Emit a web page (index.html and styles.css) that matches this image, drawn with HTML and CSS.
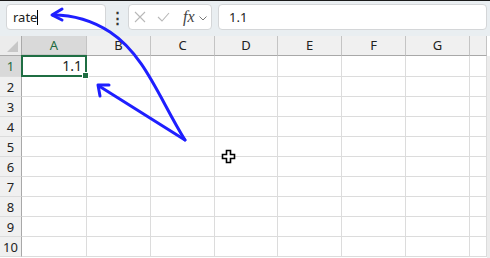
FILE: index.html
```html
<!DOCTYPE html>
<html lang="en">
<head>
    <meta charset="UTF-8">
    <title>Name box</title>
    <link rel="stylesheet" href="styles.css">
</head>
<body>
    <div class="toolbar">
        <div class="name-box">rate<span class="caret"></span></div>
        <div class="dots">&#8942;</div>
        <div class="fx-buttons">
            <svg width="12" height="12" viewBox="0 0 12 12" class="ico"><path d="M1 1L11 11M11 1L1 11" stroke="#b8b8b8" stroke-width="1.1" fill="none"/></svg>
            <svg width="13" height="10" viewBox="0 0 13 10" class="ico"><path d="M1 5L5 9L12 1" stroke="#b8b8b8" stroke-width="1.1" fill="none"/></svg>
            <span class="fx">fx</span>
            <svg width="8" height="5" viewBox="0 0 8 5" class="chev"><path d="M0.5 0.5L4 4L7.5 0.5" stroke="#777" stroke-width="1" fill="none"/></svg>
        </div>
        <div class="formula">1.1</div>
    </div>

    <div class="sheet">
        <div class="grid">
            <div class="corner"></div>
            <div class="colhead active">A</div>
            <div class="colhead">B</div>
            <div class="colhead">C</div>
            <div class="colhead">D</div>
            <div class="colhead">E</div>
            <div class="colhead">F</div>
            <div class="colhead">G</div>
            <div class="colhead"></div>

            <div class="rowhead active">1</div>
            <div class="cell selected">1.1<span class="handle"></span></div>
            <div class="cell"></div><div class="cell"></div><div class="cell"></div><div class="cell"></div><div class="cell"></div><div class="cell"></div><div class="cell"></div>

            <div class="rowhead">2</div>
            <div class="cell"></div><div class="cell"></div><div class="cell"></div><div class="cell"></div><div class="cell"></div><div class="cell"></div><div class="cell"></div><div class="cell"></div>
            <div class="rowhead">3</div>
            <div class="cell"></div><div class="cell"></div><div class="cell"></div><div class="cell"></div><div class="cell"></div><div class="cell"></div><div class="cell"></div><div class="cell"></div>
            <div class="rowhead">4</div>
            <div class="cell"></div><div class="cell"></div><div class="cell"></div><div class="cell"></div><div class="cell"></div><div class="cell"></div><div class="cell"></div><div class="cell"></div>
            <div class="rowhead">5</div>
            <div class="cell"></div><div class="cell"></div><div class="cell"></div><div class="cell"></div><div class="cell"></div><div class="cell"></div><div class="cell"></div><div class="cell"></div>
            <div class="rowhead">6</div>
            <div class="cell"></div><div class="cell"></div><div class="cell"></div><div class="cell"></div><div class="cell"></div><div class="cell"></div><div class="cell"></div><div class="cell"></div>
            <div class="rowhead">7</div>
            <div class="cell"></div><div class="cell"></div><div class="cell"></div><div class="cell"></div><div class="cell"></div><div class="cell"></div><div class="cell"></div><div class="cell"></div>
            <div class="rowhead">8</div>
            <div class="cell"></div><div class="cell"></div><div class="cell"></div><div class="cell"></div><div class="cell"></div><div class="cell"></div><div class="cell"></div><div class="cell"></div>
            <div class="rowhead">9</div>
            <div class="cell"></div><div class="cell"></div><div class="cell"></div><div class="cell"></div><div class="cell"></div><div class="cell"></div><div class="cell"></div><div class="cell"></div>
            <div class="rowhead">10</div>
            <div class="cell"></div><div class="cell"></div><div class="cell"></div><div class="cell"></div><div class="cell"></div><div class="cell"></div><div class="cell"></div><div class="cell"></div>
        </div>
        <div class="scrollbar"></div>
    </div>

    <!-- annotation arrows drawn over the sheet -->
    <svg class="overlay" width="490" height="258" viewBox="0 0 490 258">
        <g stroke="#1f1fff" stroke-width="3" fill="none" stroke-linecap="round" stroke-linejoin="round">
            <path d="M185 140C160 100 145 55 110 32C90 19 70 15 53 15"/>
            <path d="M62 9L52 15L62 20"/>
            <path d="M185 140L99 86"/>
            <path d="M100 96L98 85L109 85"/>
        </g>
        <path d="M226.5 150.5h4v4h4v4h-4v4h-4v-4h-4v-4h4z" fill="#fff" stroke="#000" stroke-width="1.6"/>
    </svg>
</body>
</html>
```

FILE: styles.css
```css
body {
    margin: 0;
    width: 490px;
    height: 258px;
    overflow: hidden;
    font-family: "Noto Sans", "Open Sans", sans-serif;
    background: #fff;
    position: relative;
}
.toolbar {
    height: 36px;
    box-sizing: border-box;
    border-top: 1px solid #1a1a1a;
    background: #e9eef1;
    display: flex;
    align-items: flex-start;
    padding: 3px 3px 0 6px;
}
.name-box {
    width: 100px;
    height: 26px;
    box-sizing: border-box;
    background: #fff;
    border: 1px solid #d4d6d8;
    border-radius: 4px;
    font-size: 13px;
    line-height: 24px;
    padding-left: 6px;
    color: #222;
}
.caret {
    display: inline-block;
    width: 1px;
    height: 15px;
    background: #000;
    vertical-align: -3px;
}
.dots {
    width: 22px;
    text-align: center;
    font-size: 15px;
    line-height: 26px;
    color: #333;
    font-weight: bold;
}
.fx-buttons {
    width: 84px;
    height: 26px;
    box-sizing: border-box;
    background: #fff;
    border: 1px solid #d4d6d8;
    border-radius: 4px;
    display: flex;
    align-items: center;
    padding-left: 5px;
}
.ico {
    margin-right: 11px;
}
.fx {
    font-family: "Liberation Serif", serif;
    font-style: italic;
    font-size: 16px;
    color: #444;
    margin-left: 2px;
    margin-right: 4px;
}
.chev {
    margin-top: 2px;
}
.formula {
    margin-left: 6px;
    flex: 1;
    height: 26px;
    box-sizing: border-box;
    background: #fff;
    border: 1px solid #d4d6d8;
    border-radius: 4px;
    font-size: 13px;
    line-height: 24px;
    padding-left: 10px;
    color: #222;
}
.sheet {
    display: flex;
}
.grid {
    display: grid;
    grid-template-columns: 22px 65px 64px 64px 63px 64px 64px 64px 17px;
    grid-template-rows: 20px 21px repeat(9, 20px);
    font-size: 13px;
    color: #222;
}
.corner {
    background: #ececec;
    border-right: 1px solid #aaa;
    border-bottom: 1px solid #aaa;
    position: relative;
}
.corner::after {
    content: "";
    position: absolute;
    right: 3px;
    bottom: 3px;
    border-left: 11px solid transparent;
    border-bottom: 11px solid #c7c7c7;
}
.colhead {
    background: #f0f0f0;
    border-right: 1px solid #c4c4c4;
    border-bottom: 1px solid #a8a8a8;
    text-align: center;
    line-height: 19px;
}
.colhead.active {
    background: #d9d9d9;
    color: #1d6b3e;
    border-bottom: 2px solid #c8c8c8;
}
.rowhead {
    background: #f0f0f0;
    border-right: 1px solid #a8a8a8;
    border-bottom: 1px solid #dcdcdc;
    text-align: center;
    line-height: 20px;
}
.rowhead.active {
    background: #d9d9d9;
    color: #1d6b3e;
}
.cell {
    border-right: 1px solid #dcdcdc;
    border-bottom: 1px solid #dcdcdc;
}
.cell.selected {
    border: 2px solid #1f6e43;
    margin: -1px 0 0 -1px;
    text-align: right;
    padding-right: 3px;
    line-height: 18px;
    font-size: 14px;
    position: relative;
}
.handle {
    position: absolute;
    right: -4px;
    bottom: -4px;
    width: 5px;
    height: 5px;
    background: #1f6e43;
    border: 1px solid #fff;
}
.scrollbar {
    width: 3px;
    margin-top: 20px;
    background: #ececec;
    height: 202px;
}
.overlay {
    position: absolute;
    left: 0;
    top: 0;
}
```
